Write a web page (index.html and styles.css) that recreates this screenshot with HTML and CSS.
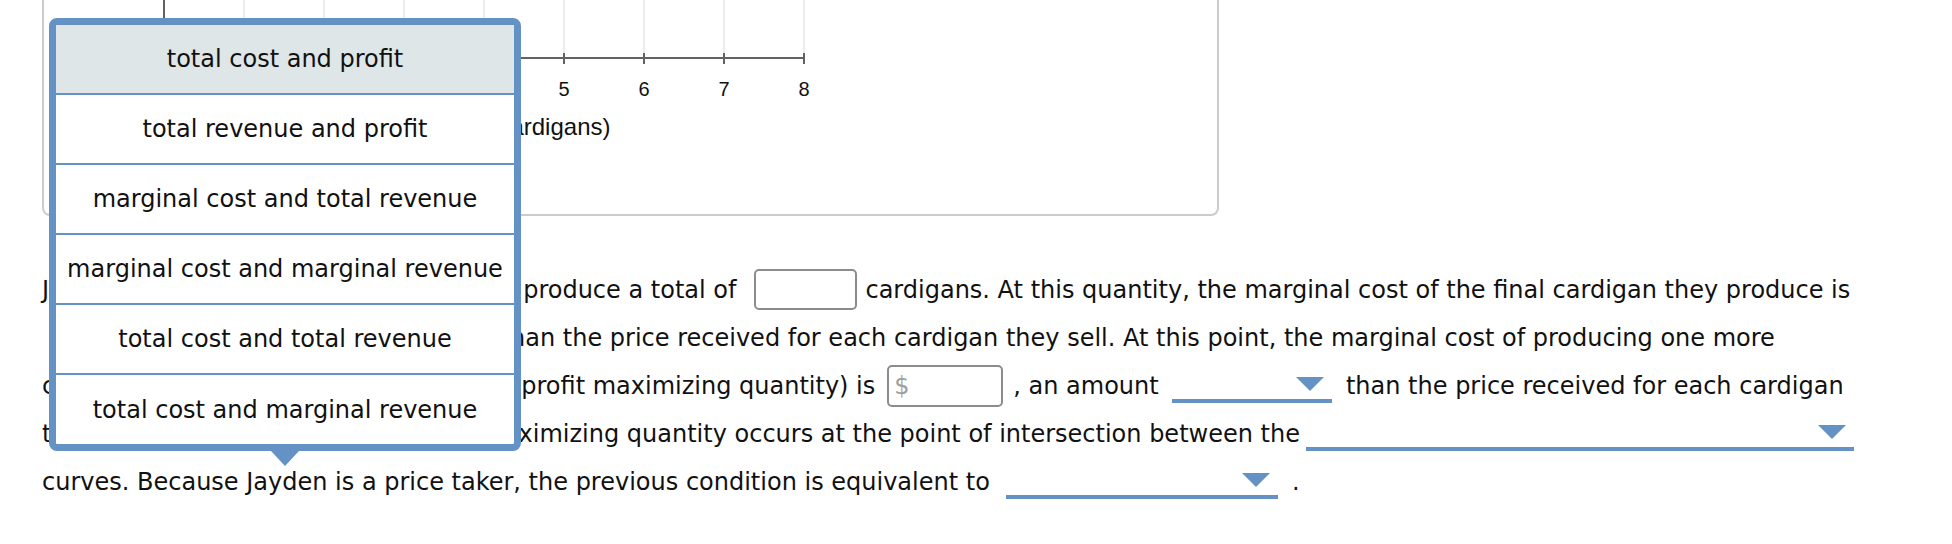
FILE: index.html
```html
<!DOCTYPE html>
<html>
<head>
<meta charset="utf-8">
<link rel="stylesheet" href="styles.css">
</head>
<body>
<div class="page">
  <div class="graph-card">
    <svg class="chart" width="820" height="214" viewBox="0 0 820 214">
      <g class="grid">
        <line x1="200" y1="0" x2="200" y2="58"/>
        <line x1="280" y1="0" x2="280" y2="58"/>
        <line x1="360" y1="0" x2="360" y2="58"/>
        <line x1="440" y1="0" x2="440" y2="58"/>
        <line x1="520" y1="0" x2="520" y2="58"/>
        <line x1="600" y1="0" x2="600" y2="58"/>
        <line x1="680" y1="0" x2="680" y2="58"/>
        <line x1="760" y1="0" x2="760" y2="58"/>
      </g>
      <g class="axis">
        <line x1="120" y1="0" x2="120" y2="59"/>
        <line x1="119" y1="58" x2="761" y2="58"/>
        <line x1="200" y1="53" x2="200" y2="64"/>
        <line x1="280" y1="53" x2="280" y2="64"/>
        <line x1="360" y1="53" x2="360" y2="64"/>
        <line x1="440" y1="53" x2="440" y2="64"/>
        <line x1="520" y1="53" x2="520" y2="64"/>
        <line x1="600" y1="53" x2="600" y2="64"/>
        <line x1="680" y1="53" x2="680" y2="64"/>
        <line x1="760" y1="53" x2="760" y2="64"/>
      </g>
      <g class="ticks">
        <text x="120" y="96">0</text>
        <text x="200" y="96">1</text>
        <text x="280" y="96">2</text>
        <text x="360" y="96">3</text>
        <text x="440" y="96">4</text>
        <text x="520" y="96">5</text>
        <text x="600" y="96">6</text>
        <text x="680" y="96">7</text>
        <text x="760" y="96">8</text>
      </g>
      <text class="axis-title" x="440" y="135">QUANTITY (Cardigans)</text>
    </svg>
  </div>

  <p class="question">Jayden can maximize profits when they <span class="lock">produce a total of<span class="blank"></span>cardigans.</span> At this quantity, the marginal cost of the final cardigan they produce is <span class="dd dd-xl"><span class="caret"></span></span> than the price received for each cardigan they sell. At this point, the marginal cost of producing one more cardigan (that is, the first unit after the profit maximizing quantity) is<span class="blank money">$</span>, an amount <span class="dd dd-s"><span class="caret"></span></span> than the price received for each cardigan they sell. As a result, Jayden's profit maximizing quantity occurs at the point of intersection between the<span class="dd dd-l"><span class="caret"></span></span> curves. Because Jayden is a price taker, the previous condition is equivalent to <span class="dd dd-m"><span class="caret"></span></span> .</p>

  <div class="menu">
    <div class="option selected">total cost and profit</div>
    <div class="option">total revenue and profit</div>
    <div class="option">marginal cost and total revenue</div>
    <div class="option">marginal cost and marginal revenue</div>
    <div class="option">total cost and total revenue</div>
    <div class="option">total cost and marginal revenue</div>
  </div>
</div>
</body>
</html>
```
FILE: styles.css
```css
html, body {
  margin: 0;
  padding: 0;
  background: #ffffff;
}

.page {
  position: relative;
  padding: 0 0 0 42px;
  font-family: "DejaVu Sans", Verdana, sans-serif;
  color: #111;
}

.graph-card {
  width: 1173px;
  height: 214px;
  border: 2px solid #cccccc;
  border-top: 0;
  border-radius: 0 0 8px 8px;
}

.chart {
  display: block;
}

.grid line {
  stroke: #ececec;
  stroke-width: 2;
}

.axis line {
  stroke: #626262;
  stroke-width: 2;
}

.ticks text {
  font-family: "Liberation Sans", Arial, sans-serif;
  font-size: 20px;
  fill: #111;
  text-anchor: middle;
}

.axis-title {
  font-family: "Liberation Sans", Arial, sans-serif;
  font-size: 24px;
  fill: #111;
  text-anchor: middle;
}

.question {
  width: 1838px;
  margin: 50px 0 0 0;
  font-size: 24px;
  line-height: 48px;
}

.blank {
  display: inline-block;
  box-sizing: border-box;
  width: 103px;
  height: 41px;
  border: 2px solid #8c8c8c;
  border-radius: 5px;
  vertical-align: -12px;
  margin: 0 8px 0 18px;
}

.money {
  width: 116px;
  height: 42px;
  margin: 0 10px 0 12px;
  padding-left: 5px;
  line-height: 38px;
  color: #a0a0a0;
  vertical-align: baseline;
}

.dd {
  position: relative;
  display: inline-block;
  box-sizing: border-box;
  height: 30px;
  border-bottom: 4px solid #6592c4;
  vertical-align: -9px;
  margin: 0 6px;
}

.dd-xl { width: 443px; margin-left: 8px; margin-right: 0; }
.dd-s { width: 160px; margin-left: 6px; }
.dd-l { width: 548px; margin-left: 6px; margin-right: 8px; }
.dd-m { width: 272px; margin-left: 9px; }

.caret {
  position: absolute;
  right: 8px;
  top: 4px;
  width: 0;
  height: 0;
  border-left: 14px solid transparent;
  border-right: 14px solid transparent;
  border-top: 14px solid #6592c4;
}

.menu {
  position: absolute;
  left: 49px;
  top: 18px;
  width: 458px;
  border: 7px solid #6592c4;
  border-radius: 8px;
  background: #fff;
}

.menu::after {
  content: "";
  position: absolute;
  left: calc(50% - 14px);
  top: calc(100% + 7px);
  border-left: 14px solid transparent;
  border-right: 14px solid transparent;
  border-top: 15px solid #6592c4;
}

.option {
  display: flex;
  align-items: center;
  justify-content: center;
  height: 68px;
  border-bottom: 2px solid #6592c4;
  font-size: 24px;
  color: #111;
  white-space: nowrap;
}

.option:last-child {
  border-bottom: 0;
  height: 69px;
}

.selected {
  background: #dfe6e8;
}
```
